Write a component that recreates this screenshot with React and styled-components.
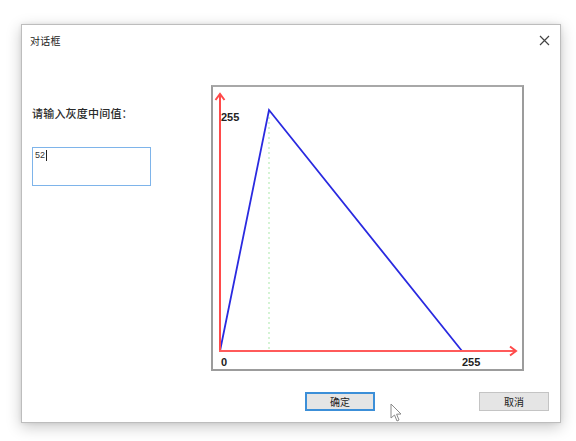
import React from "react";
import styled, { createGlobalStyle } from "styled-components";

const Global = createGlobalStyle`
  html, body { margin: 0; padding: 0; background: #ffffff; }
  body { width: 576px; height: 441px; overflow: hidden; font-family: "Noto Sans CJK SC", "Liberation Sans", sans-serif; }
`;

const Page = styled.div`
  position: relative;
  width: 576px;
  height: 441px;
  padding: 24px 0 0 21px;
  box-sizing: border-box;
`;

const Dialog = styled.div`
  width: 540px;
  height: 399px;
  box-sizing: border-box;
  border: 1px solid #bdbdbd;
  background: #ffffff;
  box-shadow: 0 4px 14px rgba(0, 0, 0, 0.22), 0 0 4px rgba(0, 0, 0, 0.08);
  display: flex;
  flex-direction: column;
`;

const TitleBar = styled.div`
  height: 30px;
  display: flex;
  align-items: center;
  justify-content: space-between;
  padding: 0 8px 0 8px;
`;

const Title = styled.span`
  font-size: 10px;
  color: #222;
  letter-spacing: 0.3px;
`;

const Close = styled.div`
  width: 14px;
  height: 14px;
  display: flex;
  align-items: center;
  justify-content: center;
  margin-right: 1px;
`;

const Main = styled.div`
  display: flex;
  padding: 31px 0 0 10px;
`;

const LeftCol = styled.div`
  width: 179px;
  display: flex;
  flex-direction: column;
`;

const Label = styled.div`
  margin-top: 19px;
  font-size: 11px;
  font-weight: 500;
  color: #2a2a2a;
  line-height: 16px;
  letter-spacing: 0.2px;
`;

const Input = styled.div`
  margin-top: 26px;
  width: 119px;
  height: 39px;
  box-sizing: border-box;
  border: 1px solid #7eb4ea;
  padding: 2px 2px;
  font-family: "Liberation Sans", sans-serif;
  font-size: 9px;
  color: #333;
  display: flex;
  align-items: flex-start;
`;

const Caret = styled.span`
  display: inline-block;
  width: 1px;
  height: 11px;
  background: #222;
  margin-left: 1px;
`;

const ChartBox = styled.div`
  width: 313px;
  height: 286px;
  box-sizing: border-box;
  border: 2px solid #9c9c9c;
  border-top-color: #a8a8a8;
  background: #ffffff;
  margin-top: -1px;
  svg { display: block; overflow: visible; }
`;

const Footer = styled.div`
  display: flex;
  padding: 21px 0 0 283px;
  gap: 104px;
`;

const Button = styled.div`
  width: 70px;
  height: 19px;
  box-sizing: border-box;
  border: ${(p) => (p.$primary ? "2px solid #3c8fd8" : "1px solid #c4c4c4")};
  background: #e5e5e5;
  display: flex;
  align-items: center;
  justify-content: center;
  font-size: 10px;
  color: #222;
`;

const Cursor = styled.svg`
  position: absolute;
  left: 390px;
  top: 403px;
`;

function Chart() {
  return (
    <svg width="309" height="282" viewBox="2 2 309 282">
      <line x1="58" y1="27" x2="58" y2="265" stroke="#b8ecb8" strokeWidth="1.2" strokeDasharray="2 3" />
      <polyline points="9,266 58,25 251,266" fill="none" stroke="#2a2ae0" strokeWidth="1.8" strokeLinejoin="miter" />
      <line x1="9" y1="266" x2="9" y2="9" stroke="#ff4a4a" strokeWidth="2" />
      <polyline points="4.5,15 9,9 13.5,15" fill="none" stroke="#ff4a4a" strokeWidth="2" />
      <line x1="8" y1="266" x2="305" y2="266" stroke="#ff5a5a" strokeWidth="2" />
      <polyline points="299,261.5 305,266 299,270.5" fill="none" stroke="#ff4a4a" strokeWidth="2" />
      <g fontFamily="'Liberation Sans', sans-serif" fontWeight="bold" fontSize="11" fill="#222">
        <text x="10" y="36">255</text>
        <text x="10" y="281">0</text>
        <text x="251" y="281">255</text>
      </g>
    </svg>
  );
}

export default function App() {
  return (
    <>
      <Global />
      <Page>
        <Dialog>
          <TitleBar>
            <Title>对话框</Title>
            <Close>
              <svg width="11" height="11" viewBox="0 0 11 11">
                <path d="M1 1 L10 10 M10 1 L1 10" stroke="#444" strokeWidth="1.2" />
              </svg>
            </Close>
          </TitleBar>
          <Main>
            <LeftCol>
              <Label>请输入灰度中间值：</Label>
              <Input>
                52<Caret />
              </Input>
            </LeftCol>
            <ChartBox>
              <Chart />
            </ChartBox>
          </Main>
          <Footer>
            <Button $primary>确定</Button>
            <Button>取消</Button>
          </Footer>
        </Dialog>
        <Cursor width="14" height="20" viewBox="0 0 14 20">
          <path d="M1 1 L1 15 L4.5 12 L7 18 L9 17 L6.6 11.2 L11 11 Z" fill="#ffffff" stroke="#8a8a8a" strokeWidth="1" strokeLinejoin="round" />
        </Cursor>
      </Page>
    </>
  );
}
